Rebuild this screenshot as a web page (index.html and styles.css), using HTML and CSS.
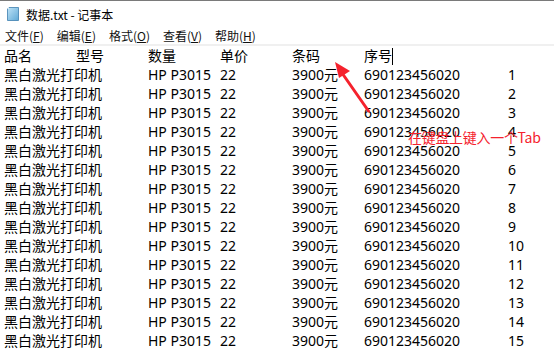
FILE: index.html
```html
<!DOCTYPE html>
<html lang="zh">
<head>
<meta charset="utf-8">
<title>数据.txt - 记事本</title>
<link rel="stylesheet" href="styles.css">
</head>
<body>
<div class="window">
  <div class="titlebar">
    <svg class="appicon" width="12" height="14" viewBox="0 0 12 14">
      <defs>
        <linearGradient id="g" x1="0" y1="0" x2="1" y2="1">
          <stop offset="0" stop-color="#bfe3f7"/>
          <stop offset="1" stop-color="#5fa9d6"/>
        </linearGradient>
      </defs>
      <path d="M2 0.5 H11.5 V13.5 H0.5 V2 Z" fill="url(#g)" stroke="#3d7fae" stroke-width="0.8"/>
      <path d="M2 0.5 L0.5 2 H2 Z" fill="#e6f4fc"/>
    </svg>
    <span class="title">数据.txt - 记事本</span>
  </div>
  <div class="menubar">
    <span class="menu">文件(<u>F</u>)</span>
    <span class="menu">编辑(<u>E</u>)</span>
    <span class="menu">格式(<u>O</u>)</span>
    <span class="menu">查看(<u>V</u>)</span>
    <span class="menu">帮助(<u>H</u>)</span>
  </div>
  <div class="editor">
<pre class="text">品名	型号	数量	单价	条码	序号<span class="caret"></span>
黑白激光打印机	HP P3015	22	3900元	690123456020	1
黑白激光打印机	HP P3015	22	3900元	690123456020	2
黑白激光打印机	HP P3015	22	3900元	690123456020	3
黑白激光打印机	HP P3015	22	3900元	690123456020	4
黑白激光打印机	HP P3015	22	3900元	690123456020	5
黑白激光打印机	HP P3015	22	3900元	690123456020	6
黑白激光打印机	HP P3015	22	3900元	690123456020	7
黑白激光打印机	HP P3015	22	3900元	690123456020	8
黑白激光打印机	HP P3015	22	3900元	690123456020	9
黑白激光打印机	HP P3015	22	3900元	690123456020	10
黑白激光打印机	HP P3015	22	3900元	690123456020	11
黑白激光打印机	HP P3015	22	3900元	690123456020	12
黑白激光打印机	HP P3015	22	3900元	690123456020	13
黑白激光打印机	HP P3015	22	3900元	690123456020	14
黑白激光打印机	HP P3015	22	3900元	690123456020	15</pre>
    <svg class="arrow" width="60" height="70" viewBox="0 0 60 70">
      <path d="M35.5 56 L9 18" stroke="#f5222d" stroke-width="3" stroke-linecap="round"/>
      <path d="M2 7 L17 16 L6 23 Z" fill="#f5222d"/>
    </svg>
    <span class="note">在键盘上键入一个Tab</span>
  </div>
</div>
</body>
</html>
```
FILE: styles.css
```css
html, body {
  margin: 0;
  padding: 0;
  background: #ffffff;
}
.window {
  width: 554px;
  height: 352px;
  border-top: 1px solid #7a7a7a;
  box-sizing: border-box;
  overflow: hidden;
  font-family: "Noto Sans", "Noto Sans CJK SC", sans-serif;
  color: #000;
}
.titlebar {
  height: 26px;
  display: flex;
  align-items: center;
  padding-left: 7px;
  gap: 7px;
  font-size: 12px;
  font-family: "Noto Sans CJK SC", sans-serif;
}
.appicon {
  display: block;
  margin-top: -1px;
}
.title {
  color: #000;
}
.menubar {
  height: 17px;
  display: flex;
  align-items: center;
  padding-left: 5px;
  gap: 13px;
  font-size: 12px;
  font-family: "Noto Sans CJK SC", sans-serif;
  color: #111;
  border-bottom: 2px solid #f0f0f0;
}
.menu u {
  text-decoration-thickness: 1px;
  text-underline-offset: 1px;
}
.editor {
  position: relative;
  padding-left: 4px;
}
.text {
  margin: 0;
  font-family: "Noto Sans", "Noto Sans CJK SC", sans-serif;
  font-size: 14px;
  line-height: 19px;
  white-space: pre;
  tab-size: 72px;
  -moz-tab-size: 72px;
  color: #000;
}
.caret {
  display: inline-block;
  width: 1px;
  height: 17px;
  background: #000;
  vertical-align: -4px;
}
.arrow {
  position: absolute;
  left: 333px;
  top: 9px;
}
.note {
  position: absolute;
  left: 408px;
  top: 82px;
  font-family: "Noto Sans CJK SC", sans-serif;
  font-size: 14px;
  line-height: 18px;
  letter-spacing: -0.3px;
  color: #f5222d;
}
```
